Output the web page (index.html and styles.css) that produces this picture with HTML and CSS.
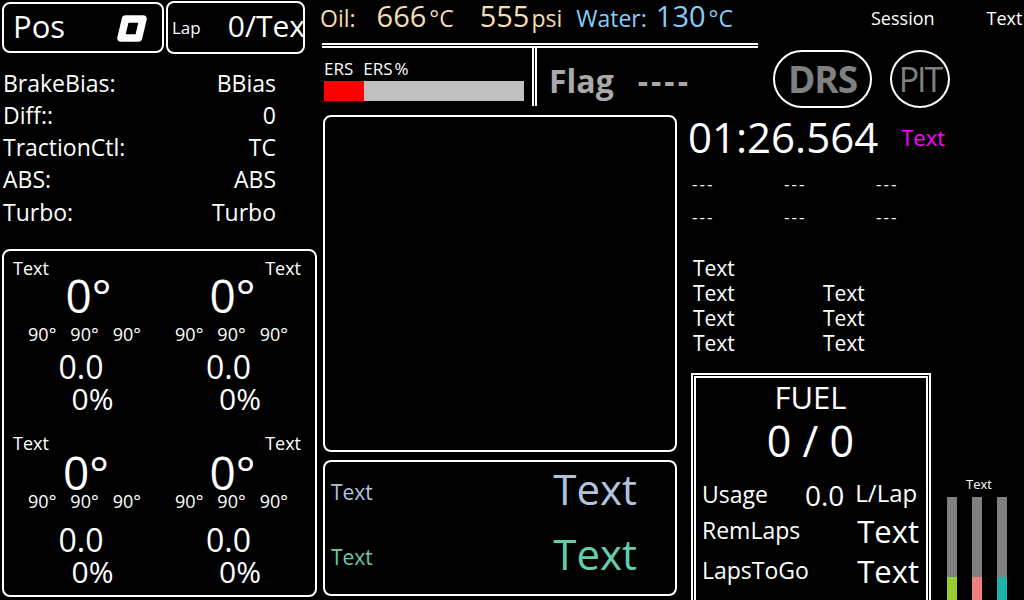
FILE: index.html
```html
<!DOCTYPE html>
<html>
<head>
<meta charset="utf-8">
<link rel="stylesheet" href="styles.css">
</head>
<body>
<div class="dash">
  <div class="left">
    <div class="top-boxes">
      <div class="box pos">
        <span class="pos-label">Pos</span>
        <svg class="pos-icon" width="30" height="27" viewBox="0 0 30 27"><polygon points="8.5,4 26,4 21.5,23 4,23" fill="none" stroke="#fff" stroke-width="7.5" stroke-linejoin="round"/></svg>
      </div>
      <div class="box lap">
        <span class="lap-label">Lap</span>
        <span class="lap-val">0/Text</span>
      </div>
    </div>
    <div class="settings">
      <div class="set-row"><span>BrakeBias:</span><span>BBias</span></div>
      <div class="set-row"><span>Diff::</span><span>0</span></div>
      <div class="set-row"><span>TractionCtl:</span><span>TC</span></div>
      <div class="set-row"><span>ABS:</span><span>ABS</span></div>
      <div class="set-row"><span>Turbo:</span><span>Turbo</span></div>
    </div>
    <div class="box tyres">
      <div class="tyre tl">
        <div class="tyre-name">Text</div>
        <div class="tyre-temp">0°</div>
        <div class="tyre-surf"><span>90°</span><span>90°</span><span>90°</span></div>
        <div class="tyre-press">0.0</div>
        <div class="tyre-wear">0%</div>
      </div>
      <div class="tyre tr">
        <div class="tyre-name">Text</div>
        <div class="tyre-temp">0°</div>
        <div class="tyre-surf"><span>90°</span><span>90°</span><span>90°</span></div>
        <div class="tyre-press">0.0</div>
        <div class="tyre-wear">0%</div>
      </div>
      <div class="tyre bl">
        <div class="tyre-name">Text</div>
        <div class="tyre-temp">0°</div>
        <div class="tyre-surf"><span>90°</span><span>90°</span><span>90°</span></div>
        <div class="tyre-press">0.0</div>
        <div class="tyre-wear">0%</div>
      </div>
      <div class="tyre br">
        <div class="tyre-name">Text</div>
        <div class="tyre-temp">0°</div>
        <div class="tyre-surf"><span>90°</span><span>90°</span><span>90°</span></div>
        <div class="tyre-press">0.0</div>
        <div class="tyre-wear">0%</div>
      </div>
    </div>
  </div>

  <div class="main">
    <div class="header">
      <div class="temps">
        <span class="t-oil">Oil:</span>
        <span class="t-num t-oilval">666</span><span class="t-unit t-degc">°C</span>
        <span class="t-num t-psi">555</span><span class="t-unit t-psiu">psi</span>
        <span class="t-water">Water:</span>
        <span class="t-num t-waterval">130</span><span class="t-unit t-wdeg">°C</span>
      </div>
      <div class="session">Session</div>
      <div class="session-val">Text</div>
    </div>

    <div class="row2">
      <div class="ersflag">
        <div class="ers">
          <div class="ers-label">ERS<span class="ers-pct">ERS<span class="pct">%</span></span></div>
          <div class="ers-bar"><div class="ers-fill" style="width:20%"></div></div>
        </div>
        <div class="flag"><span class="flag-label">Flag</span><span class="flag-val">----</span></div>
      </div>
      <div class="drs">DRS</div>
      <div class="pit">PIT</div>
    </div>

    <div class="lower">
      <div class="center-col">
        <div class="box bigbox"></div>
        <div class="box deltas">
          <div class="delta-row d1"><span class="d-small">Text</span><span class="d-big">Text</span></div>
          <div class="delta-row d2"><span class="d-small">Text</span><span class="d-big">Text</span></div>
        </div>
      </div>
      <div class="right-col">
        <div class="laptime-row"><span class="laptime">01:26.564</span><span class="lap-extra">Text</span></div>
        <div class="dash-grid">
          <span>---</span><span>---</span><span>---</span>
          <span>---</span><span>---</span><span>---</span>
        </div>
        <div class="info-grid">
          <span>Text</span><span></span>
          <span>Text</span><span>Text</span>
          <span>Text</span><span>Text</span>
          <span>Text</span><span>Text</span>
        </div>
        <div class="fuel-row">
          <div class="fuel">
            <div class="fuel-title">FUEL</div>
            <div class="fuel-amount">0 / 0</div>
            <div class="fuel-usage"><span class="fu-label">Usage</span><span class="fu-val">0.0</span><span class="fu-unit">L/Lap</span></div>
            <div class="fuel-line first"><span class="fl-label">RemLaps</span><span class="fl-val">Text</span></div>
            <div class="fuel-line"><span class="fl-label">LapsToGo</span><span class="fl-val">Text</span></div>
          </div>
          <div class="bars">
            <div class="bars-label">Text</div>
            <div class="bars-row">
              <div class="vbar"><div class="vfill green" style="height:22%"></div></div>
              <div class="vbar"><div class="vfill coral" style="height:22%"></div></div>
              <div class="vbar"><div class="vfill sea" style="height:22%"></div></div>
            </div>
          </div>
        </div>
      </div>
    </div>
  </div>
</div>
</body>
</html>
```

FILE: styles.css
```css
* { box-sizing: border-box; }
html, body {
  margin: 0;
  padding: 0;
  background: #000;
  color: #fff;
  font-family: "Open Sans", "Noto Sans", sans-serif;
  width: 1024px;
  height: 600px;
  overflow: hidden;
}
.dash { display: flex; height: 600px; }

/* ---------- left column ---------- */
.left {
  width: 320px;
  padding-left: 2px;
  display: flex;
  flex-direction: column;
  flex-shrink: 0;
}
.box { border: 2px solid #fff; border-radius: 8px; }
.top-boxes { display: flex; align-items: flex-start; gap: 2px; flex-shrink: 0; }
.pos {
  margin-top: 2px;
  width: 162px;
  height: 51px;
  display: flex;
  align-items: center;
  justify-content: space-between;
  padding: 0 15px 0 9px;
}
.pos-label { font-size: 31px; line-height: 1; margin-top: -3px; }
.pos-icon { display: block; margin-top: 1px; }
.lap {
  margin-top: 1px;
  width: 139px;
  height: 53px;
  display: flex;
  align-items: center;
  padding-left: 4px;
  overflow: hidden;
  white-space: nowrap;
}
.lap-label { font-size: 17px; margin-top: -1px; }
.lap-val { font-size: 30px; margin-left: 27px; margin-top: -4px; }

.settings {
  width: 274px;
  margin-top: 13px;
  font-size: 23px;
  flex-shrink: 0;
}
.set-row {
  display: flex;
  justify-content: space-between;
  height: 32px;
  line-height: 32px;
  padding-left: 1px;
}
.set-row:nth-child(5) { margin-top: 1px; }

.tyres {
  margin-top: 21px;
  width: 315px;
  height: 348px;
  flex-shrink: 0;
  display: grid;
  grid-template-columns: 160px 151px;
  grid-template-rows: 175px 169px;
}
.tyre { display: flex; flex-direction: column; align-items: center; }
.tl, .bl { padding-left: 9px; }
.tr, .br { padding-right: 14px; }
.tyre-name { font-size: 18px; line-height: 20px; height: 20px; margin-top: 7px; align-self: flex-start; }
.tr .tyre-name, .br .tyre-name { align-self: flex-end; }
.tyre-temp { font-size: 46px; line-height: 40px; margin-top: -3px; }
.bl .tyre-temp, .br .tyre-temp { margin-top: -1px; }
.bl .tyre-temp { margin-right: 5px; }
.tyre-surf { display: flex; gap: 14px; font-size: 18px; line-height: 18px; margin-top: 10px; margin-right: 8px; }
.bl .tyre-surf, .br .tyre-surf { margin-top: 0; }
.tr .tyre-surf, .br .tyre-surf { margin-right: 2px; }
.tyre-press { font-size: 32px; line-height: 28px; margin-top: 10px; margin-right: 15px; }
.bl .tyre-press, .br .tyre-press { margin-top: 16px; }
.tr .tyre-press, .br .tyre-press { margin-right: 8px; }
.tyre-wear { font-size: 30px; line-height: 26px; margin-top: 5px; margin-left: 8px; }
.tr .tyre-wear, .br .tyre-wear { margin-left: 15px; }

/* ---------- main ---------- */
.main { flex: 1; display: flex; flex-direction: column; min-width: 0; }
.header {
  height: 43px;
  flex-shrink: 0;
  display: flex;
  align-items: flex-start;
}
.temps {
  width: 551px;
  display: flex;
  align-items: baseline;
  white-space: nowrap;
  line-height: 32px;
  height: 36px;
  font-size: 29px;
}
.t-oil, .t-water { font-size: 23px; }
.t-oil, .t-oilval, .t-degc, .t-psi, .t-psiu { color: #f5deb3; }
.t-water, .t-waterval, .t-wdeg { color: #87cefa; }
.t-num { font-size: 29px; }
.t-unit { font-size: 23px; }
.t-oilval { margin-left: 21px; }
.t-degc { margin-left: 3px; }
.t-psi { margin-left: 26px; }
.t-psiu { margin-left: 2px; }
.t-water { margin-left: 14px; }
.t-waterval { margin-left: 9px; }
.t-wdeg { margin-left: 3px; }
.session { font-size: 18px; line-height: 34px; padding-top: 1px; }
.session-val { font-size: 18px; line-height: 34px; padding-top: 1px; margin-left: 52px; }

.row2 {
  height: 72px;
  flex-shrink: 0;
  display: flex;
  align-items: flex-start;
}
.ersflag {
  margin-left: 2px;
  width: 436px;
  border-top: 5px double #fff;
  display: flex;
}
.ers {
  width: 215px;
  height: 58px;
  border-right: 5px double #fff;
  padding-left: 2px;
}
.ers-label { font-size: 17px; line-height: 20px; margin-top: 11px; white-space: nowrap; }
.ers-pct { margin-left: 10px; }
.pct { margin-left: 2px; }
.ers-bar { width: 200px; height: 20px; background: #c0c0c0; margin-top: 2px; }
.ers-fill { height: 100%; background: #ff0000; }
.flag {
  padding-left: 12px;
  padding-top: 13px;
  color: #a9a9a9;
  font-weight: bold;
  white-space: nowrap;
  line-height: 40px;
}
.flag-label { font-size: 32px; }
.flag-val { font-size: 32px; margin-left: 24px; letter-spacing: 3px; }
.drs {
  margin-left: 15px;
  margin-top: 7px;
  width: 99px;
  height: 58px;
  border: 2px solid #fff;
  border-radius: 29px;
  color: #808080;
  font-weight: bold;
  font-size: 37px;
  line-height: 54px;
  text-align: center;
  letter-spacing: -1px;
}
.pit {
  margin-left: 18px;
  margin-top: 7px;
  width: 60px;
  height: 58px;
  border: 2px solid #fff;
  border-radius: 50%;
  color: #808080;
  font-size: 34px;
  line-height: 54px;
  text-align: center;
  letter-spacing: -2px;
}

.lower { display: flex; flex: 1; min-height: 0; }
.center-col {
  margin-left: 3px;
  width: 354px;
  display: flex;
  flex-direction: column;
  gap: 8px;
}
.bigbox { height: 337px; flex-shrink: 0; }
.deltas {
  height: 136px;
  flex-shrink: 0;
  display: flex;
  flex-direction: column;
  padding: 0 38px 0 6px;
}
.delta-row { display: flex; justify-content: space-between; align-items: center; height: 65px; flex-shrink: 0; }
.d1 { margin-top: -4px; }
.d1 { color: #b0c4de; }
.d2 { color: #66cdaa; }
.d-small { font-size: 21px; margin-top: 3px; }
.d-big { font-size: 42px; line-height: 1; margin-top: -4px; }

.right-col {
  margin-left: 13px;
  flex: 1;
  display: flex;
  flex-direction: column;
}
.right-col > * { flex-shrink: 0; }
.laptime-row { height: 44px; display: flex; align-items: center; white-space: nowrap; }
.laptime { font-size: 42px; line-height: 44px; margin-left: -2px; }
.lap-extra { color: #ff00ff; font-size: 22px; margin-left: 23px; margin-top: -1px; }
.dash-grid {
  display: grid;
  grid-template-columns: 92px 92px 92px;
  grid-auto-rows: 33px;
  font-size: 17px;
  line-height: 33px;
  letter-spacing: 2px;
  margin-top: 8px;
  padding-left: 2px;
}
.info-grid {
  margin-top: 23px;
  display: grid;
  grid-template-columns: 130px 100px;
  grid-auto-rows: 25px;
  font-size: 21px;
  line-height: 25px;
  padding-left: 3px;
}
.fuel-row { display: flex; align-items: flex-end; margin-top: 17px; }
.fuel {
  margin-left: 1px;
  width: 240px;
  height: 227px;
  border: 5px double #fff;
  border-bottom: none;
  padding: 0 7px 0 6px;
}
.fuel-title { text-align: center; font-size: 31px; line-height: 36px; margin-top: 1px; }
.fuel-amount { text-align: center; font-size: 43px; line-height: 50px; margin-top: 1px; }
.fuel-usage { height: 40px; line-height: 40px; margin-top: 7px; white-space: nowrap; font-size: 23px; }
.fu-label { font-size: 23px; }
.fu-val { font-size: 28px; margin-left: 37px; vertical-align: -3px; }
.fu-unit { font-size: 24px; margin-left: 11px; vertical-align: 1px; }
.fuel-line { display: flex; justify-content: space-between; align-items: flex-start; height: 40px; white-space: nowrap; }
.fuel-line.first { margin-top: -2px; }
.fl-label { font-size: 23px; line-height: 39px; }
.fl-val { font-size: 31px; line-height: 40px; }

.bars { margin-left: 15px; width: 62px; display: flex; flex-direction: column; align-items: center; }
.bars-label { font-size: 13px; line-height: 16px; margin-bottom: 5px; margin-left: 4px; }
.bars-row { display: flex; gap: 15px; width: 60px; }
.vbar { width: 10px; height: 103px; background: #808080; display: flex; flex-direction: column; justify-content: flex-end; }
.vfill { width: 100%; }
.green { background: #9acd32; }
.coral { background: #f08080; }
.sea { background: #20b2aa; }
```
